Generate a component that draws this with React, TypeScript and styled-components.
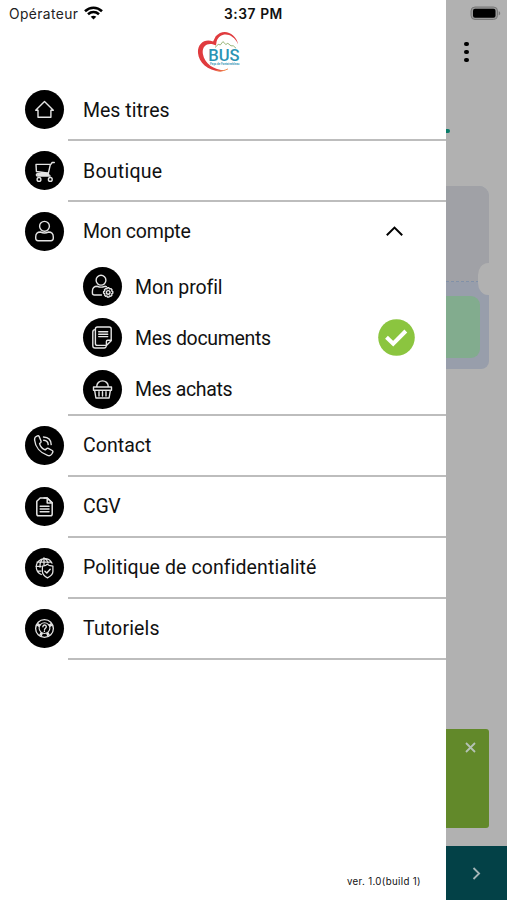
import React from "react";
import styled, { createGlobalStyle } from "styled-components";

const GlobalStyle = createGlobalStyle`
  * { box-sizing: border-box; }
  body { margin: 0; background: #fff; }
`;

const Screen = styled.div`
  display: flex;
  width: 507px;
  height: 900px;
  overflow: hidden;
  background: #b1b1b1;
`;

const Drawer = styled.nav`
  display: flex;
  flex-direction: column;
  width: 446px;
  height: 900px;
  background: #fff;
  color: #111;
`;

const StatusBar = styled.div`
  display: flex;
  align-items: center;
  height: 28px;
  padding-left: 9px;
  font-family: Inter, sans-serif;
`;

const Carrier = styled.span`
  width: 71px;
  font-size: 13.8px;
  letter-spacing: 0.4px;
  color: #222;
  white-space: nowrap;
`;

const Clock = styled.span`
  margin-left: 121px;
  font-size: 13.8px;
  font-weight: 600;
  letter-spacing: 0.55px;
  white-space: nowrap;
`;

const Wifi = styled.svg`
  margin-left: 4px;
  margin-top: -2px;
`;

const Brand = styled.div`
  height: 51px;
  padding: 1px 0 0 195px;
`;

const Item = styled.div<{ $h?: number }>`
  display: flex;
  align-items: center;
  height: ${(p) => p.$h ?? 61}px;
  padding: 0 31px 0 25px;
`;

const Section = styled.div<{ $h: number }>`
  height: ${(p) => p.$h}px;
  flex: none;
`;

const Divider = styled.div`
  height: 2px;
  margin: -1px 0 -1px 68px;
  background: #bdbdbd;
`;

const SubList = styled.div`
  padding-left: 58px;
`;

const SubItem = styled(Item)`
  height: 51.3px;
`;

const Disc = styled.span`
  display: flex;
  align-items: center;
  justify-content: center;
  flex: none;
  width: 39px;
  height: 39px;
  border-radius: 50%;
  background: #000;
`;

const Label = styled.span<{ $track: number; $gap?: number }>`
  flex: 1;
  padding-top: 2px;
  margin-left: ${(p) => p.$gap ?? 19}px;
  font: 400 19.5px/24px Roboto, sans-serif;
  letter-spacing: ${(p) => p.$track}px;
  white-space: nowrap;
`;

const Chevron = styled.svg`
  margin-right: 11px;
`;

const Version = styled.div`
  margin-top: auto;
  padding: 0 25px 11px 0;
  font: 400 9.7px/14px Inter, sans-serif;
  letter-spacing: 0.35px;
  text-align: right;
`;

const Backdrop = styled.aside`
  display: flex;
  flex-direction: column;
  width: 61px;
  height: 900px;
  background: #b1b1b1;
`;

const BackHeader = styled.div`
  display: flex;
  flex-direction: column;
  height: 186px;
  align-items: flex-start;
`;

const BatteryIcon = styled.svg`
  margin: 6px 0 0 24px;
`;

const Dots = styled.div`
  display: flex;
  flex-direction: column;
  gap: 3.4px;
  margin: 21px 0 0 18.4px;
`;

const Dot = styled.i`
  width: 4.4px;
  height: 4.4px;
  border-radius: 50%;
  background: #000;
`;

const TabMark = styled.div`
  width: 3.5px;
  height: 4px;
  margin-top: 67px;
  border-radius: 0 2px 2px 0;
  background: #087b68;
`;

const Ticket = styled.div`
  position: relative;
  display: flex;
  flex-direction: column;
  width: 42.5px;
  height: 183px;
  border-radius: 0 10px 8px 0;
  overflow: hidden;
  background: #989eab;
`;

const TicketTop = styled.div`
  height: 96px;
  background: #a0a1a6;
  border-bottom: 1px dashed #8191a8;
`;

const TicketPanel = styled.div`
  width: 34px;
  height: 62px;
  margin-top: 14px;
  border-radius: 0 9px 9px 0;
  background: #82ac8e;
`;

const Notch = styled.div`
  position: absolute;
  top: 77px;
  right: 0;
  width: 10.5px;
  height: 32px;
  border-radius: 10px 0 0 10px / 12px 0 0 12px;
  background: #b1b1b1;
`;

const Notice = styled.div`
  display: flex;
  justify-content: flex-end;
  width: 43px;
  height: 99px;
  margin-top: 359.5px;
  padding: 13px 13px 0 0;
  border-radius: 0 3px 3px 0;
  background: #62892a;
`;

const NextBar = styled.div`
  display: flex;
  align-items: center;
  height: 54px;
  margin-top: auto;
  padding-left: 26px;
  background: #034147;
`;

const Glyph: React.FC<{ children: React.ReactNode; w?: number }> = ({ children, w = 1.4 }) => (
  <svg width="39" height="39" viewBox="0 0 39 39" fill="none" stroke="#e4e4e4" strokeWidth={w} strokeLinecap="round" strokeLinejoin="round">
    {children}
  </svg>
);

const HomeIcon = () => (
  <Glyph><path d="M10.7 20.2 19.5 11.5l8.8 8.7h-2.4v7H13v-7z" /></Glyph>
);

const CartIcon = () => (
  <Glyph>
    <path d="M29.3 11.5h-2.1l-2 2.7-1.8 8-12-1.7-.4-7.1h13.8" />
    <path d="M23.4 22.2l-11 .5c-1.5.3-1.3 2.3.1 2.3h12.6M13 23.8h11" />
    <circle cx="14" cy="28.4" r="1.9" /><circle cx="25.3" cy="28.4" r="1.9" />
  </Glyph>
);

const UserIcon = () => (
  <Glyph>
    <circle cx="19.5" cy="14.3" r="4.9" />
    <path d="M15.5 20c-3 0-4.8 1.8-4.8 4.9v1.4c0 1.5.9 2.4 2.4 2.4h12.8c1.5 0 2.4-.9 2.4-2.4v-1.4c0-3.1-1.8-4.9-4.8-4.9-2.5 1.2-5.5 1.2-8 0z" />
  </Glyph>
);

const ProfileIcon = () => (
  <Glyph>
    <circle cx="18" cy="13.2" r="4.9" />
    <path d="M18.5 28H11.4c-1.4 0-2-.7-2-2v-1.8c0-3.2 2-4.9 5-4.9 2.4 1.1 5 1 7.5 0l1.5.4" />
    <path d="M22.6 21.6l1.3.3.6-1.2h1.4l.6 1.2 1.3-.3 1.2 1.2-.3 1.2 1.1.7v1.5l-1.1.6.3 1.3-1.2 1.1-1.3-.3-.6 1.2h-1.4l-.6-1.2-1.3.3-1.1-1.1.3-1.3-1.2-.6v-1.5l1.2-.7-.3-1.2z" />
    <circle cx="25.2" cy="25.4" r="1.8" />
  </Glyph>
);

const DocumentsIcon = () => (
  <Glyph>
    <path d="M14.4 9h11.8c1.2 0 2 .8 2 2v11.8l-4.8 4.6h-9c-1.3 0-2-.7-2-2V11c0-1.2.7-2 2-2z" />
    <path d="M23.4 27.2v-3.6c0-.9.4-1.3 1.3-1.3h3.4M12.2 11.6c-1.6 0-2.4.8-2.4 2.3v13.8c0 1.5.8 2.3 2.3 2.3h9.1c1 0 1.6-.4 2-1.4" />
    <path d="M15.7 13.8h9M15.7 16.2h9M15.7 18.6h9" />
  </Glyph>
);

const BasketIcon = () => (
  <Glyph w={1.4}>
    <path d="M10.5 17h18v3.2h-18zM11.6 20.2l1.3 7.8h13.2l1.3-7.8M13.8 16.8v-.8a5.7 5.1 0 0 1 11.4 0v.8M16 21.8v4.2M19.5 21.8v4.2M23 21.8v4.2" />
  </Glyph>
);

const PhoneIcon = () => (
  <Glyph>
    <path d="m10.4 11 2-1.1c.7-.4 1.4-.2 1.7.5l1.9 4.7c.3.7.1 1.1-.4 1.6l-1 .9c.7 2.8 2.8 5.2 5.6 6.3l1.5-1.3c.5-.5 1-.5 1.6-.2l3.9 2.1c.7.4.9 1.1.5 1.8l-.9 1.7c-.9 1.5-2.4 2-4.2 1.4C15.2 27 10.3 21 9.6 14c-.1-1.3 0-2.3.8-3z" />
    <path d="M18.5 11c4.8.2 7.5 3 7.7 7.6M18.7 14.2c3.1.2 4.4 1.7 4.5 4.4" />
  </Glyph>
);

const TermsIcon = () => (
  <Glyph w={1.5}>
    <path d="M15.2 11h7l5 4.9v11c0 1.2-.6 1.8-1.7 1.8H13.6c-1.2 0-1.8-.6-1.8-1.8V14.3z" />
    <path d="M19 11h3.2v4.9h5L22.2 11M15.2 19.3h8.8M15.2 22h8.8M15.2 24.7h8.8" />
  </Glyph>
);

const PrivacyIcon = () => (
  <Glyph w={1.25}>
    <path d="M16.3 26.5A8.3 8.3 0 1 1 27 15.2M19 9.9v7M19 10c-3 2-4.4 5.2-4 9.2M19 10c2.1 1.2 3.5 2.8 4.1 5M12 14h14M11 18.4h5M13 23h3" />
    <path d="m22.2 16.2 1.8 1.1 3.9.8v5.5c0 2.6-2 4.6-5.4 6.3-3.3-1.7-5.1-3.7-5.1-6.3v-5.5l3.4-.8z" fill="#000" />
    <path d="m19.9 23.2 1.9 1.8 3.4-3.8" strokeWidth="1.5" />
  </Glyph>
);

const HelpIcon = () => (
  <Glyph>
    <circle cx="19.5" cy="19.5" r="8.9" strokeWidth="1.3" />
    <circle cx="19.5" cy="19.1" r="5.4" strokeWidth="1.1" />
    <path d="M12.2 15.2 15 17M26.8 15.2 24 17M15.5 26.6l1.2-2.8M23.5 26.6l-1.2-2.8" strokeWidth="2.8" strokeLinecap="butt" />
    <path d="M17.9 17.7c.1-2.3 3.4-2.1 3.4.1 0 1.5-1.8 1.4-1.8 3M19.4 22.3v.1" strokeWidth="1.4" />
  </Glyph>
);

const Logo = () => (
  <svg width="48" height="46" viewBox="0 0 48 46" fill="none">
    <path d="M43.3 15.5C40.7 3.7 28.4-1.4 20.7 7.2L18.1 12.6C9.6 9 2.3 15.2 3 24c.8 9.3 9.5 17.8 22.3 18.4l5.2-1.2c-11.8.1-20.9-6.7-22.6-16.2-1.2-6.7 3.3-11.5 10.5-9.5l2.6.9.6-4c2.9-9.2 15.6-10.2 21.7 3.1z" fill="#e03b3e" />
    <path d="M21.5 41.7c4 .8 7.5.2 11.5-1.8" stroke="#f28c52" strokeWidth="1" />
    <path d="m20 18.5 3.2-3.1 2.2.5 2.5-3.3 3 2.9 1.9-1.2 3.2 2.5h2.3l2.8 2.5" stroke="#8dad6b" strokeWidth=".9" />
    <text x="13.3" y="31.8" textLength="31.2" lengthAdjust="spacingAndGlyphs" fontFamily="Roboto, sans-serif" fontWeight="500" fontSize="16" fill="#2b94b5">BUS</text>
    <text x="15" y="36.2" textLength="29.5" lengthAdjust="spacingAndGlyphs" fontFamily="Roboto, sans-serif" fontWeight="700" fontSize="3" fill="#3f9cba">Pays de Fontainebleau</text>
  </svg>
);

export default function App() {
  return (
    <>
      <GlobalStyle />
      <Screen>
        <Drawer>
          <StatusBar>
            <Carrier>Opérateur</Carrier>
            <Wifi width="19" height="14" viewBox="0 0 19 14" fill="none" stroke="#000" strokeWidth="2.6">
              <path d="M1 5.2c5-4.6 12-4.6 17 0M4 8.3c3.3-2.9 7.7-2.9 11 0" />
              <path d="m9.5 13.5-2.8-2.8c1.7-1.4 3.9-1.4 5.6 0z" fill="#000" stroke="none" />
            </Wifi>
            <Clock>3:37 PM</Clock>
          </StatusBar>
          <Brand><Logo /></Brand>
          <Item><Disc><HomeIcon /></Disc><Label $track={0}>Mes titres</Label></Item>
          <Divider />
          <Item><Disc><CartIcon /></Disc><Label $track={0.25}>Boutique</Label></Item>
          <Divider />
          <Section $h={213.5}>
            <Item $h={60}>
              <Disc><UserIcon /></Disc><Label $track={-0.22}>Mon compte</Label>
              <Chevron width="19" height="12" viewBox="0 0 19 12" fill="none" stroke="#000" strokeWidth="2">
                <path d="m1.8 10.2 7.7-7.6 7.7 7.6" />
              </Chevron>
            </Item>
            <SubList>
              <SubItem><Disc><ProfileIcon /></Disc><Label $gap={13} $track={-0.1}>Mon profil</Label></SubItem>
              <SubItem>
                <Disc><DocumentsIcon /></Disc><Label $gap={13} $track={-0.33}>Mes documents</Label>
                <svg width="37" height="37" viewBox="0 0 37 37" fill="none">
                  <circle cx="18.5" cy="18.5" r="18.3" fill="#8bc53f" />
                  <path d="m8.5 18.2 6.7 6.5L27.8 12" stroke="#fff" strokeWidth="4" />
                </svg>
              </SubItem>
              <SubItem><Disc><BasketIcon /></Disc><Label $gap={13} $track={-0.38}>Mes achats</Label></SubItem>
            </SubList>
          </Section>
          <Divider />
          <Item><Disc><PhoneIcon /></Disc><Label $track={0.05}>Contact</Label></Item>
          <Divider />
          <Item><Disc><TermsIcon /></Disc><Label $track={-0.3}>CGV</Label></Item>
          <Divider />
          <Item><Disc><PrivacyIcon /></Disc><Label $track={0.1}>Politique de confidentialité</Label></Item>
          <Divider />
          <Item><Disc><HelpIcon /></Disc><Label $track={0.15}>Tutoriels</Label></Item>
          <Divider />
          <Version>ver. 1.0(build 1)</Version>
        </Drawer>
        <Backdrop>
          <BackHeader>
            <BatteryIcon width="32" height="15" viewBox="0 0 32 15">
              <rect x="1" y="1" width="26.5" height="12.5" rx="4" fill="#999" stroke="#777" />
              <rect x="3" y="2.8" width="22.5" height="9" rx="2" fill="#000" />
              <path d="M28.7 5.2c2 .7 2 3.5 0 4.2z" fill="#777" />
            </BatteryIcon>
            <Dots><Dot /><Dot /><Dot /></Dots>
            <TabMark />
          </BackHeader>
          <Ticket><TicketTop /><TicketPanel /><Notch /></Ticket>
          <Notice>
            <svg width="11" height="11" viewBox="0 0 11 11" stroke="#b5c2b5" strokeWidth="1.8"><path d="m1 1 9 9M10 1l-9 9" /></svg>
          </Notice>
          <NextBar>
            <svg width="9" height="13" viewBox="0 0 9 13" fill="none" stroke="#a5b5b7" strokeWidth="1.8"><path d="m1.5 1 5.6 5.5L1.5 12" /></svg>
          </NextBar>
        </Backdrop>
      </Screen>
    </>
  );
}
